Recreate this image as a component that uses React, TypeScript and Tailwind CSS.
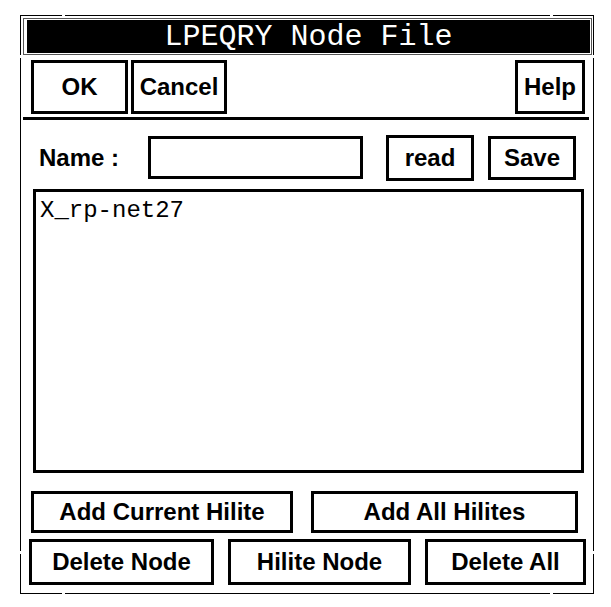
const sans = "font-['Liberation_Sans',Arial,sans-serif]";

type BtnProps = {
  label: string;
  className?: string;
};

function Btn({ label, className = "" }: BtnProps) {
  return (
    <div
      className={`flex shrink-0 items-center justify-center border-[3px] border-black bg-white text-[24px] font-bold leading-none text-black ${sans} ${className}`}
    >
      {label}
    </div>
  );
}

export default function App() {
  return (
    <div className="h-[607px] w-[611px] bg-white pl-[20px] pt-[15px]">
      <div className="relative flex h-[579px] w-[574px] flex-col border border-black">
        {/* resize-handle notches in the window frame */}
        <span className="absolute left-[41px] top-[-1px] h-[1px] w-[3px] bg-white" />
        <span className="absolute left-[529px] top-[-1px] h-[1px] w-[3px] bg-white" />
        <span className="absolute bottom-[-1px] left-[41px] h-[1px] w-[3px] bg-white" />
        <span className="absolute bottom-[-1px] left-[529px] h-[1px] w-[3px] bg-white" />
        <span className="absolute left-[-1px] top-[39px] h-[3px] w-[1px] bg-white" />
        <span className="absolute right-[-1px] top-[39px] h-[3px] w-[1px] bg-white" />
        <span className="absolute bottom-[39px] left-[-1px] h-[3px] w-[1px] bg-white" />
        <span className="absolute bottom-[39px] right-[-1px] h-[3px] w-[1px] bg-white" />

        {/* title bar */}
        <div className="ml-[2px] mr-[1px] mt-[2px] border border-[#555] py-[1px] pl-[3px] pr-[1px]">
          <div className="flex h-[33px] items-center justify-center bg-black font-['Liberation_Mono',monospace] text-[30px] leading-none text-white">
            LPEQRY Node File
          </div>
        </div>

        {/* action buttons */}
        <div className="ml-[10px] mr-[8px] mt-[5px] flex">
          <Btn label="OK" className="h-[54px] w-[97px]" />
          <Btn label="Cancel" className="ml-[3px] h-[54px] w-[96px]" />
          <Btn label="Help" className="ml-auto h-[54px] w-[70px]" />
        </div>

        <div className="ml-[2px] mr-[4px] mt-[3px] h-[3px] bg-black" />

        {/* name row */}
        <div className="mt-[14px] flex h-[47px] items-center pl-[18px]">
          <span className={`w-[109px] shrink-0 text-[24px] font-bold leading-none text-black ${sans}`}>
            Name :
          </span>
          <div className="h-[43px] w-[215px] shrink-0 border-[3px] border-black bg-white" />
          <Btn label="read" className="ml-[23px] h-[46px] w-[88px]" />
          <Btn label="Save" className="ml-[14px] h-[44px] w-[88px]" />
        </div>

        {/* node list */}
        <div className="ml-[12px] mt-[8px] h-[284px] w-[551px] border-[3px] border-black bg-white pl-[4px] pt-[5px]">
          <div className="font-['Liberation_Mono',monospace] text-[24px] leading-[28px] text-black">
            X_rp-net27
          </div>
        </div>

        <div className="ml-[10px] mt-[18px] flex gap-[18px]">
          <Btn label="Add Current Hilite" className="h-[42px] w-[262px]" />
          <Btn label="Add All Hilites" className="h-[42px] w-[267px]" />
        </div>

        <div className="ml-[8px] mt-[6px] flex gap-[14px]">
          <Btn label="Delete Node" className="h-[46px] w-[185px]" />
          <Btn label="Hilite Node" className="h-[46px] w-[183px]" />
          <Btn label="Delete All" className="h-[46px] w-[161px]" />
        </div>
      </div>
    </div>
  );
}
